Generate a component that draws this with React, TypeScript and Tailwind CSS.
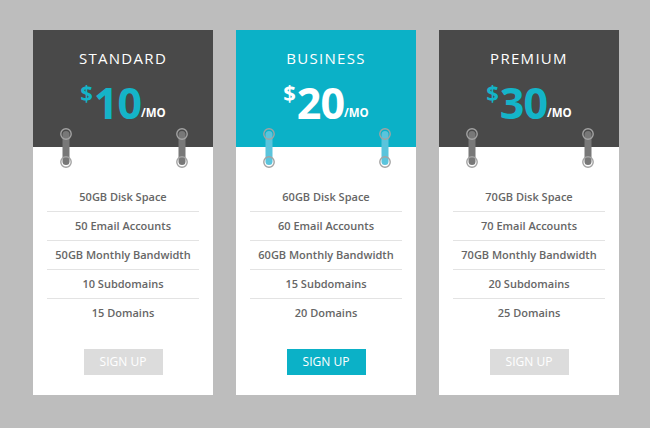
import React from 'react';

type Plan = {
  name: string;
  price: string;
  features: string[];
  featured?: boolean;
};

const PLANS: Plan[] = [
  {
    name: 'STANDARD',
    price: '10',
    features: ['50GB Disk Space', '50 Email Accounts', '50GB Monthly Bandwidth', '10 Subdomains', '15 Domains'],
  },
  {
    name: 'BUSINESS',
    price: '20',
    featured: true,
    features: ['60GB Disk Space', '60 Email Accounts', '60GB Monthly Bandwidth', '15 Subdomains', '20 Domains'],
  },
  {
    name: 'PREMIUM',
    price: '30',
    features: ['70GB Disk Space', '70 Email Accounts', '70GB Monthly Bandwidth', '20 Subdomains', '25 Domains'],
  },
];

// little binder ring hanging over the header edge
const Ring = ({ color, className }: { color: string; className: string }) => (
  <svg width="14" height="42" viewBox="0 0 14 42" className={`absolute top-[97px] ${className}`}>
    <rect x="3.5" y="4" width="7" height="34" rx="3.5" fill={color} />
    <circle cx="7" cy="7" r="5.2" fill="none" stroke="#a3a3a3" strokeWidth="1.4" />
    <circle cx="7" cy="35" r="5.2" fill="none" stroke="#a3a3a3" strokeWidth="1.4" />
  </svg>
);

const PlanCard: React.FC<{ plan: Plan }> = ({ plan }) => {
  const featured = !!plan.featured;
  return (
    <div className="relative w-[180px] bg-white flex flex-col">
      <div
        className={`h-[117px] flex flex-col items-center pt-[19px] ${featured ? 'bg-[#0bb1c7]' : 'bg-[#494949]'}`}
      >
        <div className="text-white text-[15px] leading-[18px] tracking-[1.3px]">{plan.name}</div>
        <div className={`flex items-start mt-[15px] ${featured ? 'text-white' : 'text-[#14b4c8]'}`}>
          <span className="text-[22px] leading-[22px] font-bold mt-[-1px] mr-[1px]">$</span>
          <span className="text-[43px] leading-[42px] font-bold tracking-[-1px]">{plan.price}</span>
          <span className="text-[11.5px] leading-none font-bold text-white self-end mb-[6px]">/MO</span>
        </div>
      </div>

      <Ring color={featured ? '#5ac4dc' : '#787878'} className="left-[26px]" />
      <Ring color={featured ? '#5ac4dc' : '#787878'} className="left-[142px]" />

      <div className="flex flex-col pt-[36px] px-[14px]">
        {plan.features.map((f, i) => (
          <div
            key={f}
            className={`h-[29px] flex items-center justify-center text-[11px] font-semibold text-[#666666] ${
              i < plan.features.length - 1 ? 'border-b border-[#e3e3e3]' : ''
            }`}
          >
            {f}
          </div>
        ))}
      </div>

      <div className="flex justify-center pt-[21px] pb-[20px]">
        <button
          className={`w-[79px] h-[26px] text-[12px] text-white ${featured ? 'bg-[#0bb1c7]' : 'bg-[#dcdcdc]'}`}
        >
          SIGN UP
        </button>
      </div>
    </div>
  );
};

export default function App() {
  return (
    <div
      className="w-[650px] h-[428px] bg-[#bdbdbd] flex items-start gap-[23px] pt-[30px] pl-[33px]"
      style={{ fontFamily: '"Open Sans", "Noto Sans", sans-serif' }}
    >
      {PLANS.map((p) => (
        <PlanCard key={p.name} plan={p} />
      ))}
    </div>
  );
}
